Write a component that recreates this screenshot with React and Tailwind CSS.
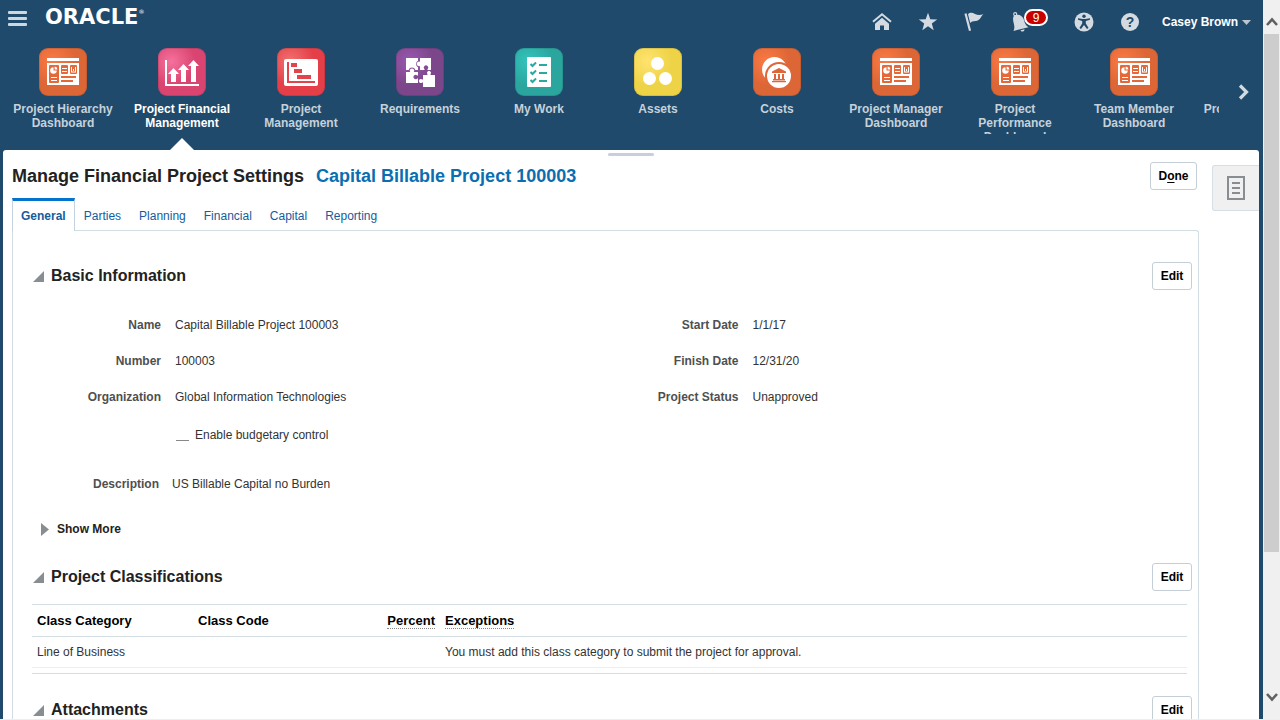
import React from 'react';

function DashboardGlyph() {
  return (
    <g>
      <path fill="#fff" d="M8 10h32v3H8zM8 15h32v22H8z" />
      <g fill="#e4683a">
        <rect x="10" y="17" width="10" height="18" rx="1" />
        <rect x="22" y="17" width="7" height="9" rx="1" />
        <rect x="31" y="17" width="7" height="9" rx="1" />
        <path d="M22 28h15v2H22zM22 32h12v2H22z" />
      </g>
      <g fill="#fff">
        <path d="M14.500 19.200v3.300h3.300a3.300 3.300 0 1 1-3.300-3.300z" />
        <path d="M15.600 18.600a3 3 0 0 1 2.800 2.800h-2.800z" />
        <path d="M12 29h6v1h-6zM12 32h6v1h-6zM23 20h5v1h-5zM23 23h5v1h-5z" />
        <path d="M32 19h1v5h-1zM34 21h1v2h-1zM36 19h1v5h-1zM32 23.500h5v1h-5z" />
      </g>
    </g>
  );
}

function FinancialGlyph() {
  return (
    <path
      fill="#fff"
      d="M7 12h2v24h32v2H7zM15.500 20l5.500 6h-3v8h-5v-8h-3zM25.500 16l5.500 6h-3v12h-5V22h-3zM35.500 12l5.500 6h-3v16h-5V18h-3z"
    />
  );
}

function GanttGlyph() {
  return (
    <g>
      <rect x="7" y="11" width="34" height="27" rx="2" fill="#fff" />
      <path fill="#e4434c" d="M10 14h2v19h26v2H10zM14 15h6v4h-6zM17 21h8v4h-8zM20 27h14v4H20z" />
    </g>
  );
}

function PuzzleGlyph() {
  return (
    <g>
      <path
        fill="#fff"
        d="M10 10h12v2.800a3.600 3.600 0 0 0 0 6.400V22h-2.600a3.600 3.600 0 0 0-6.800 0H10z"
      />
      <path
        fill="#fff"
        d="M24 10h11v12h-3.500v-.800a2.200 2.200 0 1 0-3 0v.800H24v-4a2.300 2.300 0 1 1 0-4.200z"
      />
      <path
        fill="#fff"
        d="M10 24h4.200a2.200 2.200 0 1 1 3.600 0H22v3.500h-.800a2.200 2.200 0 1 0 0 3H22V35H10z"
      />
      <path
        fill="#fff"
        d="M27 27h4.500v-.800a2 2 0 1 1 3 0v.800H39v12H27v-4.500h-.800a2 2 0 1 1 0-3h.800z"
      />
    </g>
  );
}

function ChecklistGlyph() {
  return (
    <g>
      <rect x="12" y="9" width="24" height="30" rx="1" fill="#fff" />
      <path fill="#2ba8a1" d="M24 16h8v2h-8zM24 24h8v2h-8zM24 32h8v2h-8z" />
      <path
        fill="none"
        stroke="#2ba8a1"
        strokeWidth="2"
        d="M15.500 16l2 2 3.500-3.500M15.500 24l2 2 3.500-3.500M15.500 32l2 2 3.500-3.500"
      />
    </g>
  );
}

function CirclesGlyph() {
  return (
    <g fill="#fff">
      <circle cx="23.500" cy="15.500" r="6.500" />
      <circle cx="15.500" cy="30.500" r="6.500" />
      <circle cx="31.500" cy="30.500" r="6.500" />
    </g>
  );
}

function CoinsGlyph() {
  return (
    <g>
      <circle cx="21.500" cy="21.500" r="12.500" fill="#fff" />
      <circle cx="26" cy="28" r="14" fill="#df6737" />
      <circle cx="26" cy="28" r="12" fill="#fff" />
      <path
        fill="#df6737"
        d="M26 20l7 3.500V25H19v-1.500zM21 26h2v5h-2zM25 26h2v5h-2zM29 26h2v5h-2zM20 31h12v1.500H20zM19 33h14v1.200H19z"
      />
    </g>
  );
}

const palettes = {
  orange: ['#fb7a44', '#dd6636'],
  pink: ['#f5719c', '#d94470'],
  red: ['#f1716f', '#e43f49'],
  purple: ['#9a58ae', '#7c468b'],
  teal: ['#33c4bb', '#2aa69f'],
  yellow: ['#ffe370', '#efd347'],
};

function TileIcon({ id, palette, children }) {
  const [light, dark] = palettes[palette];
  return (
    <svg className="size-12 shrink-0" viewBox="0 0 48 48" aria-hidden="true">
      <defs>
        <radialGradient id={id} cx="0.28" cy="0.28" r="0.5">
          <stop offset="0" stopColor={light} />
          <stop offset="1" stopColor={dark} />
        </radialGradient>
      </defs>
      <rect width="48" height="48" rx="9" fill={`url(#${id})`} />
      <rect x="0.5" y="0.5" width="47" height="47" rx="8.500" fill="none" stroke="#000" strokeOpacity="0.1" />
      {children}
    </svg>
  );
}

const tiles = [
  { label: 'Project Hierarchy Dashboard', palette: 'orange', Glyph: DashboardGlyph },
  { label: 'Project Financial Management', palette: 'pink', Glyph: FinancialGlyph, current: true },
  { label: 'Project Management', palette: 'red', Glyph: GanttGlyph },
  { label: 'Requirements', palette: 'purple', Glyph: PuzzleGlyph },
  { label: 'My Work', palette: 'teal', Glyph: ChecklistGlyph },
  { label: 'Assets', palette: 'yellow', Glyph: CirclesGlyph },
  { label: 'Costs', palette: 'orange', Glyph: CoinsGlyph },
  { label: 'Project Manager Dashboard', palette: 'orange', Glyph: DashboardGlyph },
  { label: 'Project Performance Dashboard', palette: 'orange', Glyph: DashboardGlyph },
  { label: 'Team Member Dashboard', palette: 'orange', Glyph: DashboardGlyph },
  { label: 'Project Resource', palette: 'orange', Glyph: DashboardGlyph },
];

function IconButton({ label, children }) {
  return (
    <button type="button" aria-label={label} className="flex size-5 shrink-0 items-center justify-center text-[#d3dae1]">
      {children}
    </button>
  );
}

function Header() {
  return (
    <header className="flex h-10 shrink-0 items-start justify-between pl-2 pr-3">
      <div className="flex items-start">
        <button type="button" aria-label="Navigator" className="mt-[11px]">
          <svg className="h-[15px] w-[19px]" viewBox="0 0 19 15" fill="#cfd7de" aria-hidden="true">
            <rect width="19" height="3" rx="1" />
            <rect y="6" width="19" height="3" rx="1" />
            <rect y="12" width="19" height="3" rx="1" />
          </svg>
        </button>
        <a href="#home" className="ml-[18px] mt-1 flex items-start font-['DejaVu_Sans',sans-serif] text-[21px] leading-[26px] font-bold text-white">
          ORACLE
          <span className="text-[6px] leading-4 font-normal">®</span>
        </a>
      </div>
      <div className="mt-3 flex items-center gap-[26px]">
        <IconButton label="Home">
          <svg className="size-5" viewBox="0 0 20 20" aria-hidden="true">
            <path d="M1 9.800l9-7.600 9 7.600" fill="none" stroke="currentColor" strokeWidth="2" />
            <path d="M10 5.800l7 5.900V18h-5v-4.500H8V18H3v-6.300z" fill="currentColor" />
          </svg>
        </IconButton>
        <IconButton label="Favorites">
          <svg className="size-5" viewBox="0 0 20 20" aria-hidden="true">
            <path d="M10 .8l2.300 6.400 6.900.2-5.400 4.200 1.900 6.600L10 14.300l-5.700 3.900 1.900-6.600L.8 7.400l6.900-.2z" fill="currentColor" />
          </svg>
        </IconButton>
        <IconButton label="Watchlist">
          <svg className="size-5" viewBox="0 0 20 20" aria-hidden="true">
            <path d="M1.500 1.500L6 18.800" fill="none" stroke="currentColor" strokeWidth="2.200" />
            <path d="M4 2.200C6-.2 8.500.6 11 1.900c3 1.400 5.500 1.200 8.500.1-2.500 2.200-2.800 5.600-6.500 6.800-2.600.8-4.600-.2-6.800 2.200z" fill="currentColor" />
          </svg>
        </IconButton>
        <button type="button" aria-label="Notifications, 9 unread" className="relative flex h-5 w-[38px] items-center text-[#d3dae1]">
          <svg className="size-5" viewBox="0 0 20 20" aria-hidden="true">
            <circle cx="5.200" cy="2.200" r="1.500" fill="none" stroke="currentColor" strokeWidth="1.200" />
            <path d="M4 3.500c4.500-2 8.800.2 10 4.500.8 3 1.500 5.500 4.500 7.200L3.500 19c1.200-2.500 1-4.500.3-7.500C3 8.500 2.500 6 4 3.500z" fill="currentColor" />
            <path d="M10.500 18.200l4-1c.4 2.400-3.400 3.400-4 1z" fill="currentColor" />
          </svg>
          <span className="absolute -top-[3px] right-0 flex h-[17px] w-6 items-center justify-center rounded-full border-2 border-white bg-[#c80000] text-xs text-white">
            9
          </span>
        </button>
        <IconButton label="Accessibility">
          <svg className="size-5" viewBox="0 0 20 20" aria-hidden="true">
            <circle cx="10" cy="10" r="9.500" fill="currentColor" />
            <g fill="#1f4a6c">
              <circle cx="10" cy="4.200" r="1.700" />
              <path d="M4 6.200l4.500.8h3l4.500-.8v1.600l-4.200 1.200v2.500l2.800 4.600-1.600.9L10 13l-3 4-1.600-.9 2.800-4.600V9L4 7.800z" />
            </g>
          </svg>
        </IconButton>
        <IconButton label="Help">
          <svg className="size-5" viewBox="0 0 20 20" aria-hidden="true">
            <circle cx="10" cy="10" r="9" fill="currentColor" />
            <text x="10" y="15" textAnchor="middle" fontFamily="Liberation Sans, sans-serif" fontSize="14" fontWeight="700" fill="#1f4a6c">
              ?
            </text>
          </svg>
        </IconButton>
        <button type="button" className="-ml-1 flex items-center gap-1 text-xs font-bold whitespace-nowrap text-white">
          Casey Brown
          <svg className="h-[5px] w-[9px]" viewBox="0 0 9 5" aria-hidden="true">
            <path d="M0 0h9L4.500 5z" fill="#b9c5cf" />
          </svg>
        </button>
      </div>
    </header>
  );
}

function TileStrip() {
  return (
    <nav className="flex shrink-0 pt-2" aria-label="Springboard">
      <div className="flex h-[102px] min-w-0 flex-1 gap-px overflow-hidden pl-1">
        {tiles.map(({ label, palette, Glyph, current }, i) => (
          <a
            key={label}
            href="#app"
            aria-current={current ? 'page' : undefined}
            className={`flex w-[118px] shrink-0 flex-col items-center ${current ? 'text-white' : 'text-[#c7d1d9]'}`}
          >
            <TileIcon id={`tile-${i}`} palette={palette}>
              <Glyph />
            </TileIcon>
            <span className="mt-1.5 h-8 w-[106px] overflow-hidden text-center text-xs leading-[14px] font-bold">
              {label}
            </span>
            {current && (
              <svg className="mt-1 h-3 w-6" viewBox="0 0 24 12" aria-hidden="true">
                <path d="M12 0l12 12H0z" fill="#fff" />
              </svg>
            )}
          </a>
        ))}
      </div>
      <button type="button" aria-label="Next" className="mt-[35px] flex h-[18px] w-11 items-center justify-center pl-1.5">
        <svg className="h-4 w-3" viewBox="0 0 12 16" aria-hidden="true">
          <path d="M2 1.500L8.500 8 2 14.500" fill="none" stroke="#d3dae1" strokeWidth="3.200" />
        </svg>
      </button>
    </nav>
  );
}

function OutlineButton({ children, className }) {
  return (
    <button
      type="button"
      className={`h-7 shrink-0 rounded-[3px] border border-[#c4ced7] bg-white text-xs font-bold text-black ${className}`}
    >
      {children}
    </button>
  );
}

function SectionHeading({ children, className = '' }) {
  return (
    <div className={`flex items-center justify-between pl-px ${className}`}>
      <h2 className="flex items-center gap-[7px] text-base font-bold text-[#222]">
        <button type="button" aria-label="Collapse section" className="flex">
          <svg className="size-[11px]" viewBox="0 0 11 11" aria-hidden="true">
            <path d="M11 0v11H0z" fill="#878d91" />
          </svg>
        </button>
        {children}
      </h2>
      <OutlineButton className="w-10">Edit</OutlineButton>
    </div>
  );
}

function FieldList({ items }) {
  return (
    <dl>
      {items.map(([name, value]) => (
        <div key={name} className="flex h-9 items-center gap-3.5">
          <dt className="w-[129px] text-right font-bold text-[#4f4f4f]">{name}</dt>
          <dd>{value}</dd>
        </div>
      ))}
    </dl>
  );
}

const tabs = ['General', 'Parties', 'Planning', 'Financial', 'Capital', 'Reporting'];

function Tabs() {
  return (
    <div role="tablist" className="mt-2 -mb-px flex h-[33px] shrink-0">
      {tabs.map((tab, i) => (
        <button
          key={tab}
          type="button"
          role="tab"
          aria-selected={i === 0}
          className={`border-x border-t-[3px] px-2 text-xs text-[#145c9e] ${
            i === 0 ? 'z-10 border-x-[#c4d3df] border-t-[#0572ce] bg-white font-bold' : 'border-transparent'
          }`}
        >
          {tab}
        </button>
      ))}
    </div>
  );
}

function ClassificationTable() {
  return (
    <div className="mt-[13px] mr-[5px] border-y border-[#d3dde4] pb-[5px]">
      <table className="w-full border-separate border-spacing-0 text-left">
        <colgroup>
          <col className="w-[161px]" />
          <col className="w-[161px]" />
          <col className="w-[86px]" />
          <col />
        </colgroup>
        <thead>
          <tr className="h-8 text-[13px] text-black">
            <th className="border-b border-[#d3dde4] px-[5px] py-0">Class Category</th>
            <th className="border-b border-[#d3dde4] px-[5px] py-0">Class Code</th>
            <th className="border-b border-[#d3dde4] px-[5px] py-0 text-right">
              <span className="border-b border-dotted border-[#888]">Percent</span>
            </th>
            <th className="border-b border-[#d3dde4] px-[5px] py-0">
              <span className="border-b border-dotted border-[#888]">Exceptions</span>
            </th>
          </tr>
        </thead>
        <tbody>
          <tr className="h-[31px]">
            <td className="border-b border-[#ebeff1] px-[5px] py-0">Line of Business</td>
            <td className="border-b border-[#ebeff1] px-[5px] py-0"></td>
            <td className="border-b border-[#ebeff1] px-[5px] py-0"></td>
            <td className="border-b border-[#ebeff1] px-[5px] py-0">
              You must add this class category to submit the project for approval.
            </td>
          </tr>
        </tbody>
      </table>
    </div>
  );
}

function SettingsPanel() {
  return (
    <main className="mr-1 ml-[3px] flex min-h-0 flex-1 flex-col overflow-hidden rounded-t-[3px] bg-white">
      <div className="mx-auto mt-[3px] h-[3px] w-[46px] shrink-0 rounded-full bg-[#c8cedb]" />
      <div className="flex min-h-0 flex-1 gap-[13px] pl-[9px]">
        <div className="flex min-w-0 flex-1 flex-col pt-1.5">
          <div className="flex h-7 shrink-0 items-center justify-between pr-0.5">
            <h1 className="flex gap-3 text-lg font-bold text-[#222]">
              Manage Financial Project Settings
              <span className="text-[#0a6eb0]">Capital Billable Project 100003</span>
            </h1>
            <OutlineButton className="w-[47px]">
              D<span className="underline underline-offset-2">o</span>ne
            </OutlineButton>
          </div>
          <Tabs />
          <div className="flex-1 rounded-tr-[3px] border-x border-t border-[#d3dde4] pt-[31px] pr-1.5 pl-[19px] text-xs text-[#333]">
            <SectionHeading>Basic Information</SectionHeading>
            <div className="mt-[17px] mr-[5px] grid grid-cols-2">
              <FieldList
                items={[
                  ['Name', 'Capital Billable Project 100003'],
                  ['Number', '100003'],
                  ['Organization', 'Global Information Technologies'],
                ]}
              />
              <FieldList
                items={[
                  ['Start Date', '1/1/17'],
                  ['Finish Date', '12/31/20'],
                  ['Project Status', 'Unapproved'],
                ]}
              />
            </div>
            <label className="mt-0.5 flex h-9 items-center gap-1.5 pl-36">
              <input type="checkbox" className="h-3 w-[13px] appearance-none border-b border-[#888]" />
              Enable budgetary control
            </label>
            <dl className="mt-[13px] flex h-9 items-center gap-[13px]">
              <dt className="w-[127px] text-right font-bold text-[#4f4f4f]">Description</dt>
              <dd>US Billable Capital no Burden</dd>
            </dl>
            <button type="button" className="mt-[9px] flex h-9 items-center gap-2 pl-[9px] font-bold text-[#222]">
              <svg className="h-[13px] w-2" viewBox="0 0 8 13" aria-hidden="true">
                <path d="M0 0l8 6.500L0 13z" fill="#878d91" />
              </svg>
              Show More
            </button>
            <SectionHeading className="mt-4">Project Classifications</SectionHeading>
            <ClassificationTable />
            <SectionHeading className="mt-[22px]">Attachments</SectionHeading>
          </div>
        </div>
        <button
          type="button"
          aria-label="Details drawer"
          className="mt-[9px] flex h-[46px] w-[47px] shrink-0 items-center justify-center rounded-l-[3px] border border-r-0 border-[#d6dfe6] bg-[#f0f0f0]"
        >
          <svg className="h-6 w-[18px]" viewBox="0 0 18 24" aria-hidden="true">
            <rect x="1" y="1" width="16" height="22" fill="none" stroke="#878d91" strokeWidth="2" />
            <path d="M5 6h8v2H5zM5 11h8v2H5zM5 16h8v2H5z" fill="#878d91" />
          </svg>
        </button>
      </div>
    </main>
  );
}

function ScrollRail() {
  return (
    <div className="flex w-[17px] shrink-0 flex-col items-center bg-[#f0f0f0] pt-[17px] pb-[17px]" aria-hidden="true">
      <svg className="h-[9px] w-3 shrink-0" viewBox="0 0 12 9">
        <path d="M1 8l5-5.500L11 8" fill="none" stroke="#606060" strokeWidth="2.600" />
      </svg>
      <div className="mt-2 flex min-h-0 w-full flex-1 flex-col px-px">
        <div className="flex-[11] bg-[#cdcdcd]" />
        <div className="flex-[3]" />
      </div>
      <svg className="h-[9px] w-3 shrink-0" viewBox="0 0 12 9">
        <path d="M1 1l5 5.500L11 1" fill="none" stroke="#606060" strokeWidth="2.600" />
      </svg>
    </div>
  );
}

export default function App() {
  return (
    <div className="flex h-screen overflow-hidden border-b border-[#eeeeee] font-['Liberation_Sans',Arial,sans-serif]">
      <div className="flex min-w-0 flex-1 flex-col bg-[#1f4a6c]">
        <Header />
        <TileStrip />
        <SettingsPanel />
      </div>
      <ScrollRail />
    </div>
  );
}
